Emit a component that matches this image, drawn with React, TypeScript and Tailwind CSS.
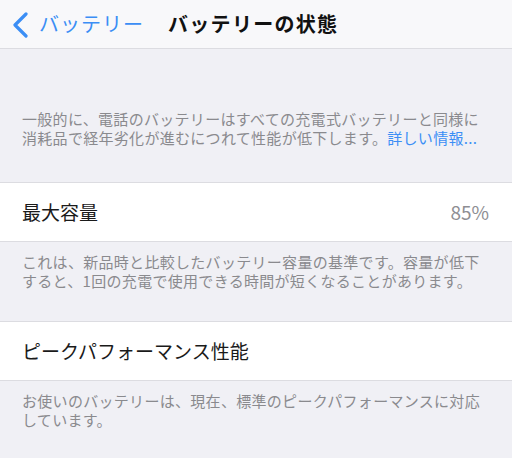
import React from "react";

const jp = { fontFamily: '"Noto Sans CJK JP", "Noto Sans", sans-serif' };

const Footer = ({ lines, link, pb = "pb-[31px]" }: { lines: string[]; link?: string; pb?: string }) => (
  <div className={`px-[22px] pt-[10px] ${pb} text-[15px] leading-[19px] tracking-[0.3px] text-[#8a8a8e]`}>
    {lines.map((l, i) => (
      <div key={i} className="whitespace-nowrap">
        {l}
        {link && i === lines.length - 1 && <span className="text-[#3b8ef5]">{link}</span>}
      </div>
    ))}
  </div>
);

const Row = ({ label, value }: { label: string; value?: string }) => (
  <div className="flex h-[60px] items-center justify-between border-y border-[#dcdce1] bg-white pl-[22px] pr-[23px]">
    <span className="text-[19px] text-[#1a1a1a]">{label}</span>
    {value && <span className="text-[19px] text-[#8e8e93]">{value}</span>}
  </div>
);

const App = () => {
  return (
    <div className="h-[458px] w-[512px] overflow-hidden bg-[#f0f0f5]" style={jp}>
      <div className="flex h-[49px] items-center border-b border-[#dcdce1] bg-[#f8f8fa]">
        <div className="flex items-center pl-[11px] text-[#3b8ef5]">
          <svg width="18" height="26" viewBox="0 0 18 26" className="mt-[1px]">
            <polyline points="15,2 4,13 15,24" fill="none" stroke="#3b8ef5" strokeWidth="3.2" strokeLinecap="round" strokeLinejoin="round" />
          </svg>
          <span className="ml-[10px] text-[20px] tracking-[1px]">バッテリー</span>
        </div>
        <span className="ml-[24px] text-[20px] font-bold tracking-[1.3px] text-[#111]">バッテリーの状態</span>
      </div>
      <div className="h-[50px]" />
      <Footer
        pb="pb-[35px]"
        lines={["一般的に、電話のバッテリーはすべての充電式バッテリーと同様に", "消耗品で経年劣化が進むにつれて性能が低下します。"]}
        link="詳しい情報..."
      />
      <Row label="最大容量" value="85%" />
      <Footer lines={["これは、新品時と比較したバッテリー容量の基準です。容量が低下", "すると、1回の充電で使用できる時間が短くなることがあります。"]} />
      <Row label="ピークパフォーマンス性能" />
      <Footer lines={["お使いのバッテリーは、現在、標準のピークパフォーマンスに対応", "しています。"]} />
    </div>
  );
};

export default App;
